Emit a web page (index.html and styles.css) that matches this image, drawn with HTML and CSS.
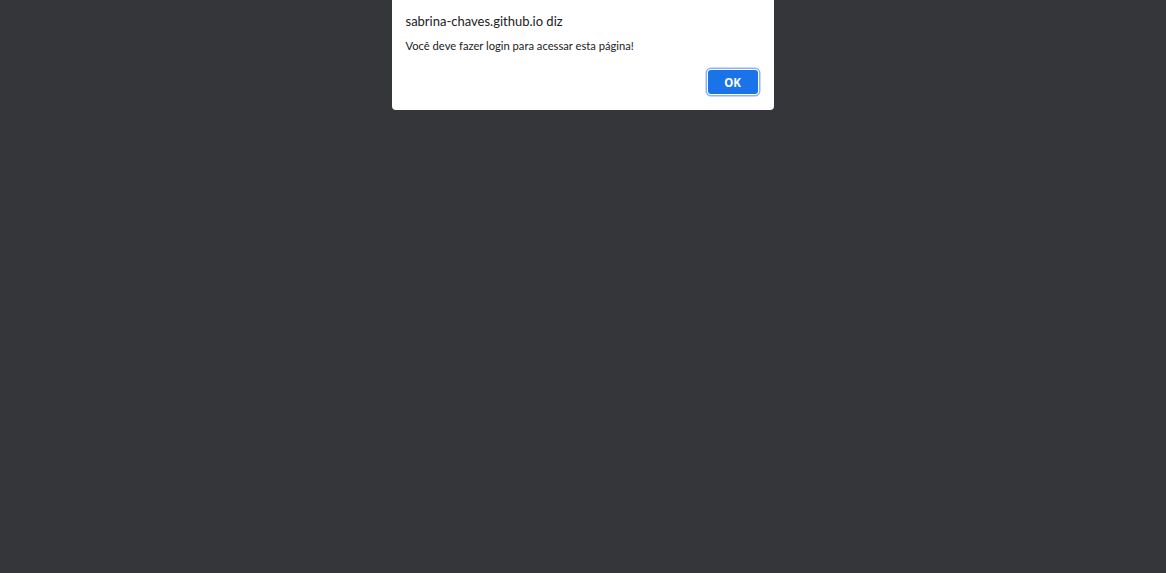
FILE: index.html
```html
<!DOCTYPE html>
<html lang="pt-BR">
<head>
<meta charset="utf-8">
<title>Alerta</title>
<link rel="stylesheet" href="styles.css">
</head>
<body>
<div class="page">
  <div class="dialog" role="alertdialog">
    <div class="title">sabrina-chaves.github.io diz</div>
    <div class="message">Você deve fazer login para acessar esta página!</div>
    <div class="actions">
      <button class="ok">OK</button>
    </div>
  </div>
</div>
</body>
</html>
```

FILE: styles.css
```css
html, body {
  margin: 0;
  padding: 0;
  height: 100%;
  background: #35363a;
}
.page {
  height: 100%;
  display: flex;
  justify-content: center;
  align-items: flex-start;
}
.dialog {
  width: 382px;
  height: 110px;
  box-sizing: border-box;
  background: #ffffff;
  border-radius: 0 0 4px 4px;
  padding: 12px 16px 0 14px;
  display: flex;
  flex-direction: column;
  font-family: Lato, "Noto Sans", sans-serif;
  margin-right: 1px;
}
.title {
  font-size: 13px;
  color: #202124;
  line-height: 18px;
}
.message {
  font-size: 11.2px;
  color: #202124;
  line-height: 16px;
  margin-top: 8px;
}
.actions {
  display: flex;
  justify-content: flex-end;
  margin-top: 16px;
}
.ok {
  width: 50px;
  height: 24px;
  box-sizing: border-box;
  background: #1a73e8;
  color: #ffffff;
  border: none;
  border-radius: 3px;
  box-shadow: 0 0 0 1px #ffffff, 0 0 0 2.5px #8ab4f8;
  font-family: "Noto Sans", "Open Sans", sans-serif;
  font-weight: 700;
  font-size: 11.5px;
  padding: 0;
}
```
